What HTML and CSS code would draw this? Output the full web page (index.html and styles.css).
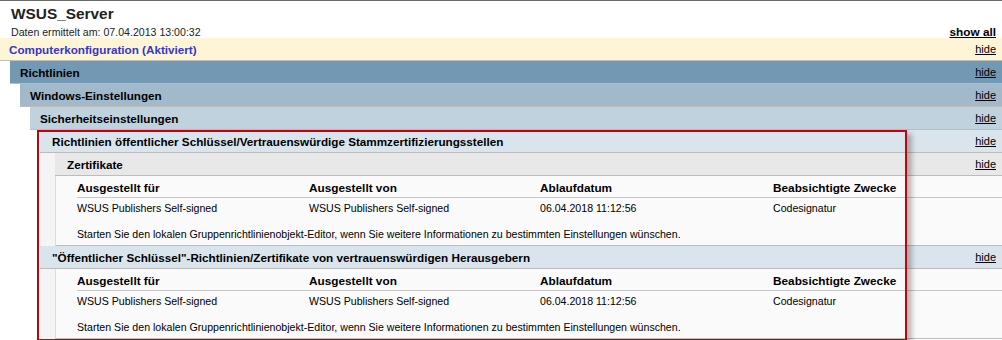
FILE: index.html
```html
<!DOCTYPE html>
<html lang="de">
<head>
    <meta charset="UTF-8">
    <title>WSUS_Server</title>
    <link rel="stylesheet" href="styles.css">
</head>
<body>

    <div class="title">
        <h1>WSUS_Server</h1>
        <div class="meta">
            <span>Daten ermittelt am: 07.04.2013 13:00:32</span>
            <a class="showall" href="#">show all</a>
        </div>
    </div>

    <!-- Computerkonfiguration -->
    <div class="he he0"><span>Computerkonfiguration (Aktiviert)</span><a href="#">hide</a></div>
    <div class="lvl">
        <div class="he he1"><span>Richtlinien</span><a href="#">hide</a></div>
        <div class="lvl">
            <div class="he he2"><span>Windows-Einstellungen</span><a href="#">hide</a></div>
            <div class="lvl">
                <div class="he he3"><span>Sicherheitseinstellungen</span><a href="#">hide</a></div>
                <div class="lvl">

                    <div class="he he4"><span>Richtlinien öffentlicher Schlüssel/Vertrauenswürdige Stammzertifizierungsstellen</span><a href="#">hide</a></div>
                    <div class="sub">
                        <div class="he he5"><span>Zertifikate</span><a href="#">hide</a></div>
                        <div class="container">
                            <table class="info">
                                <tr>
                                    <th class="c1">Ausgestellt für</th>
                                    <th class="c2">Ausgestellt von</th>
                                    <th class="c3">Ablaufdatum</th>
                                    <th>Beabsichtigte Zwecke</th>
                                </tr>
                                <tr>
                                    <td>WSUS Publishers Self-signed</td>
                                    <td>WSUS Publishers Self-signed</td>
                                    <td>06.04.2018 11:12:56</td>
                                    <td>Codesignatur</td>
                                </tr>
                            </table>
                            <p class="hint">Starten Sie den lokalen Gruppenrichtlinienobjekt-Editor, wenn Sie weitere Informationen zu bestimmten Einstellungen wünschen.</p>
                        </div>
                    </div>

                    <div class="he he4"><span>"Öffentlicher Schlüssel"-Richtlinien/Zertifikate von vertrauenswürdigen Herausgebern</span><a href="#">hide</a></div>
                    <div class="sub">
                        <div class="container">
                            <table class="info">
                                <tr>
                                    <th class="c1">Ausgestellt für</th>
                                    <th class="c2">Ausgestellt von</th>
                                    <th class="c3">Ablaufdatum</th>
                                    <th>Beabsichtigte Zwecke</th>
                                </tr>
                                <tr>
                                    <td>WSUS Publishers Self-signed</td>
                                    <td>WSUS Publishers Self-signed</td>
                                    <td>06.04.2018 11:12:56</td>
                                    <td>Codesignatur</td>
                                </tr>
                            </table>
                            <p class="hint">Starten Sie den lokalen Gruppenrichtlinienobjekt-Editor, wenn Sie weitere Informationen zu bestimmten Einstellungen wünschen.</p>
                        </div>
                    </div>

                </div>
            </div>
        </div>
    </div>

    <!-- Markierung -->
    <div class="mark"></div>

</body>
</html>
```

FILE: styles.css
```css
body {
    font-family: "Liberation Sans", Arial, sans-serif;
    font-size: 10.6px;
    color: #000;
    margin: 0;
    border-top: 1px solid #6a6a6a;
    background: #fff;
    position: relative;
    overflow: hidden;
    height: 339px;
}
a {
    color: #000;
}
.title {
    padding: 0 6px 0 11px;
}
h1 {
    font-size: 15.4px;
    margin: 0;
    padding-top: 4px;
    height: 18px;
    color: #222;
}
.meta {
    display: flex;
    justify-content: space-between;
    align-items: flex-end;
    height: 15px;
    color: #222;
}
.showall {
    font-weight: bold;
    font-size: 11.8px;
    margin-bottom: -1px;
}
.lvl {
    margin-left: 10px;
}
.he {
    display: flex;
    justify-content: space-between;
    align-items: center;
    height: 22px;
    border-bottom: 1px solid #bcbcbc;
    padding: 0 6px 0 10px;
    font-weight: bold;
    font-size: 11.7px;
}
.he a {
    font-weight: normal;
    font-size: 11px;
}
.he0 {
    background: #fdf5d5;
    color: #3535cc;
    padding-left: 9px;
}
.he1 {
    background: #7298b3;
}
.he2 {
    background: #a1b9cb;
}
.he3 {
    background: #bfd2de;
}
.he4 {
    background: #dae4ec;
    padding-left: 12px;
}
.he5 {
    background: #e8e8e8;
    padding-left: 12px;
}
.sub {
    padding-left: 15px;
    background: #f4f4f4;
}
.container {
    background: #fafafa;
    border-left: 1px solid #dcdcdc;
    border-bottom: 1px solid #bcbcbc;
    padding: 5px 0 0 21px;
    height: 64px;
}
.info {
    width: 100%;
    border-collapse: collapse;
    table-layout: fixed;
}
.info .c1 {
    width: 232px;
}
.info .c2 {
    width: 231px;
}
.info .c3 {
    width: 233px;
}
.info th {
    text-align: left;
    font-weight: bold;
    font-size: 11.8px;
    padding: 0 0 2px 0;
    height: 14px;
    border-bottom: 1px solid #c8c8c8;
}
.info td {
    padding: 3px 0 0 0;
    height: 13px;
}
.hint {
    margin: 14px 0 0 0;
}
.mark {
    position: absolute;
    left: 37px;
    top: 129px;
    width: 866px;
    height: 207px;
    border: 2px solid #c8000b;
    box-shadow: 5px 4px 5px rgba(0, 0, 0, 0.25);
}
```
